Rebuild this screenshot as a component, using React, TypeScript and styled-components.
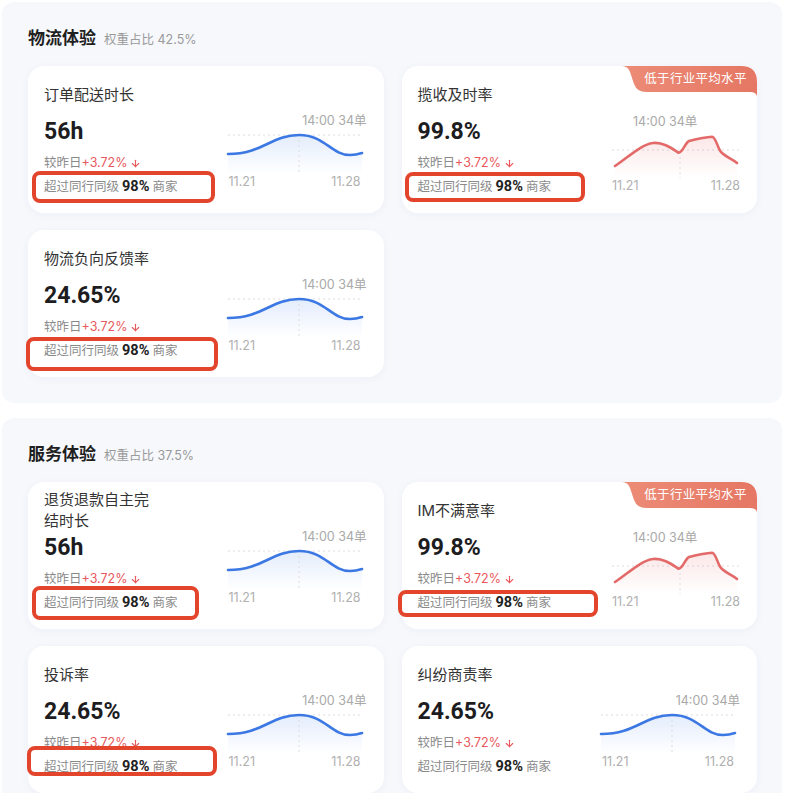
import React from "react";
import styled, { createGlobalStyle } from "styled-components";
import { ArrowDown } from "lucide-react";

const GlobalStyle = createGlobalStyle`
  body {
    margin: 0;
    background: #ffffff;
    font-family: "Inter", "Noto Sans CJK SC", sans-serif;
    -webkit-font-smoothing: antialiased;
  }
`;

type Mark = { l: number; t: number; w: number; h: number };
type CardVo = {
  title: string;
  value: string;
  chart: "blue" | "red";
  badge?: boolean;
  mark?: Mark;
};
type SectionVo = { title: string; weight: string; cards: CardVo[] };

const sections: SectionVo[] = [
  {
    title: "物流体验",
    weight: "42.5%",
    cards: [
      { title: "订单配送时长", value: "56h", chart: "blue", mark: { l: 4, t: 105, w: 183, h: 32 } },
      { title: "揽收及时率", value: "99.8%", chart: "red", badge: true, mark: { l: 3, t: 106, w: 180, h: 30 } },
      { title: "物流负向反馈率", value: "24.65%", chart: "blue", mark: { l: -2, t: 107, w: 192, h: 34 } },
    ],
  },
  {
    title: "服务体验",
    weight: "37.5%",
    cards: [
      { title: "退货退款自主完结时长", value: "56h", chart: "blue", mark: { l: 4, t: 104, w: 167, h: 34 } },
      { title: "IM不满意率", value: "99.8%", chart: "red", badge: true, mark: { l: -4, t: 108, w: 200, h: 27 } },
      { title: "投诉率", value: "24.65%", chart: "blue", mark: { l: -1, t: 100, w: 190, h: 30 } },
      { title: "纠纷商责率", value: "24.65%", chart: "blue" },
    ],
  },
];

const Page = styled.div`
  padding: 2px;
  display: flex;
  flex-direction: column;
  gap: 15px;
`;

const Section = styled.section`
  width: 780px;
  box-sizing: border-box;
  background: #f6f8fc;
  border-radius: 12px;
  padding: 24px 25px 26px 26px;
`;

const SectionHeader = styled.div`
  display: flex;
  align-items: baseline;
  gap: 8px;
  height: 24px;
  margin-bottom: 16px;
`;

const SectionTitle = styled.h2`
  margin: 0;
  font-size: 17px;
  line-height: 24px;
  font-weight: 600;
  color: #1f1f1f;
`;

const SectionWeight = styled.span`
  font-size: 12.5px;
  color: #9a9a9a;
`;

const Grid = styled.div`
  display: grid;
  grid-template-columns: 1fr 1fr;
  gap: 17px 18px;
`;

const Card = styled.div`
  position: relative;
  height: 147px;
  background: #ffffff;
  border-radius: 16px;
  box-shadow: 0 2px 10px rgba(40, 60, 110, 0.04);
  display: flex;
  justify-content: space-between;
`;

const Info = styled.div`
  display: flex;
  flex-direction: column;
  padding: 7px 0 0 16px;
`;

const TitleBox = styled.div`
  height: 42px;
  display: flex;
  align-items: center;
`;

const CardTitle = styled.div`
  font-size: 15px;
  line-height: 21px;
  max-width: 110px;
  color: #333333;
`;

const Value = styled.div`
  margin-top: 2px;
  font-family: "Roboto", sans-serif;
  font-size: 23px;
  line-height: 30px;
  font-weight: 700;
  color: #1d1d1f;
`;

const Compare = styled.div`
  margin-top: 7px;
  font-size: 12.5px;
  line-height: 18px;
  color: #8a8a8a;
  white-space: nowrap;
  display: flex;
  align-items: center;
`;

const Up = styled.span`
  color: #e8585d;
  display: inline-flex;
  align-items: center;
  gap: 3px;
`;

const Beat = styled.div`
  margin-top: 5px;
  font-size: 12.5px;
  line-height: 20px;
  color: #8a8a8a;
  white-space: nowrap;

  strong {
    font-family: "Roboto", sans-serif;
    font-size: 14.5px;
    font-weight: 700;
    color: #222222;
    margin: 0 3px;
  }
`;

const ChartWrap = styled.div<{ $red?: boolean }>`
  width: ${(p) => (p.$red ? 128 : 142)}px;
  margin-top: ${(p) => (p.$red ? 47 : 46)}px;
  margin-right: 17px;
  display: flex;
  flex-direction: column;

  svg {
    display: block;
  }
`;

const ChartLabel = styled.div<{ $red?: boolean }>`
  font-size: 12.5px;
  line-height: 18px;
  color: #a9a9a9;
  text-align: ${(p) => (p.$red ? "left" : "right")};
  padding-left: ${(p) => (p.$red ? 21 : 0)}px;
  white-space: nowrap;
`;

const Dates = styled.div<{ $red?: boolean }>`
  display: flex;
  justify-content: space-between;
  font-size: 12.5px;
  line-height: 16px;
  color: #b0b0b0;
  padding: ${(p) => (p.$red ? "0" : "0 6px 0 4px")};
`;

const Badge = styled.div`
  position: absolute;
  top: 0;
  right: 0;
  width: 135px;
  height: 30px;
  background: linear-gradient(90deg, #ec8c77, #e57764);
  clip-path: path("M0 0 Q6 0 8 6 L12 18 Q15 26 24 26 H128 Q134 26 135 30 V16 Q135 0 119 0 Z");
  color: #ffffff;
  font-size: 12.5px;
  line-height: 26px;
  text-align: center;
  padding-left: 12px;
  box-sizing: border-box;
  letter-spacing: 0.3px;
`;

const Highlight = styled.div<{ $m: Mark }>`
  position: absolute;
  left: ${(p) => p.$m.l}px;
  top: ${(p) => p.$m.t}px;
  width: ${(p) => p.$m.w}px;
  height: ${(p) => p.$m.h}px;
  box-sizing: border-box;
  border: 4px solid #e2452c;
  border-radius: 8px;
  pointer-events: none;
`;

const blueLine = "M3 24 C38 24 46 5 74 5 C100 5 106 25 125 25 C131 25 134 24 137 23";

function BlueChart() {
  return (
    <svg width="142" height="44" viewBox="0 0 142 44">
      <defs>
        <linearGradient id="blueFill" x1="0" y1="0" x2="0" y2="1">
          <stop offset="0%" stopColor="#3b7be8" stopOpacity="0.14" />
          <stop offset="100%" stopColor="#3b7be8" stopOpacity="0" />
        </linearGradient>
      </defs>
      <line x1="3" y1="5" x2="138" y2="5" stroke="#dcdcdc" strokeDasharray="2 3" />
      <path d={blueLine + " L137 44 L3 44 Z"} fill="url(#blueFill)" />
      <line x1="74" y1="5" x2="74" y2="44" stroke="#dcdcdc" strokeDasharray="2 3" />
      <path d={blueLine} fill="none" stroke="#3b78e3" strokeWidth="2.6" strokeLinecap="round" />
    </svg>
  );
}

const redLine =
  "M3 35 C15 27 30 13 41 12 C50 11 58 16 66 21.5 C70 23 73 12 77 10 C85 8 95 6 100 5.7 C104 6 105 16 109 21 C114 26 120 28 125 32";

function RedChart() {
  return (
    <svg width="128" height="47" viewBox="0 0 128 47">
      <defs>
        <linearGradient id="redFill" x1="0" y1="0" x2="0" y2="1">
          <stop offset="0%" stopColor="#e86a6a" stopOpacity="0.16" />
          <stop offset="100%" stopColor="#e86a6a" stopOpacity="0" />
        </linearGradient>
      </defs>
      <line x1="0" y1="19" x2="128" y2="19" stroke="#dcdcdc" strokeDasharray="2 3" />
      <path d={redLine + " L125 47 L3 47 Z"} fill="url(#redFill)" />
      <line x1="68" y1="21" x2="68" y2="47" stroke="#dcdcdc" strokeDasharray="2 3" />
      <path d={redLine} fill="none" stroke="#e36a69" strokeWidth="2.6" strokeLinecap="round" />
    </svg>
  );
}

function MetricCard({ card }: { card: CardVo }) {
  const red = card.chart === "red";
  return (
    <Card>
      {card.badge && <Badge>低于行业平均水平</Badge>}
      <Info>
        <TitleBox>
          <CardTitle>{card.title}</CardTitle>
        </TitleBox>
        <Value>{card.value}</Value>
        <Compare>
          较昨日
          <Up>
            +3.72%
            <ArrowDown size={11} strokeWidth={2.4} />
          </Up>
        </Compare>
        <Beat>
          超过同行同级<strong>98%</strong>商家
        </Beat>
      </Info>
      <ChartWrap $red={red}>
        <ChartLabel $red={red}>14:00 34单</ChartLabel>
        {red ? <RedChart /> : <BlueChart />}
        <Dates $red={red}>
          <span>11.21</span>
          <span>11.28</span>
        </Dates>
      </ChartWrap>
      {card.mark && <Highlight $m={card.mark} />}
    </Card>
  );
}

export default function App() {
  return (
    <>
      <GlobalStyle />
      <Page>
        {sections.map((s) => (
          <Section key={s.title}>
            <SectionHeader>
              <SectionTitle>{s.title}</SectionTitle>
              <SectionWeight>权重占比 {s.weight}</SectionWeight>
            </SectionHeader>
            <Grid>
              {s.cards.map((c) => (
                <MetricCard key={c.title} card={c} />
              ))}
            </Grid>
          </Section>
        ))}
      </Page>
    </>
  );
}
